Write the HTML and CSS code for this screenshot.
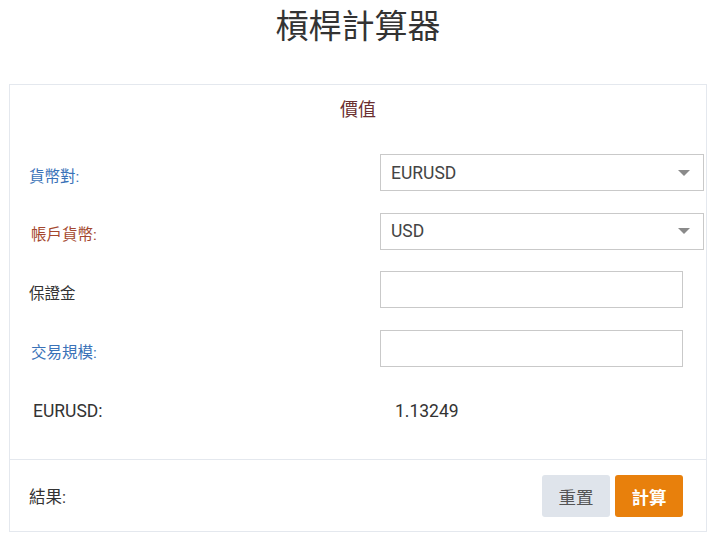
FILE: index.html
```html
<!DOCTYPE html>
<html lang="zh-Hant">
<head>
<meta charset="utf-8">
<title>槓桿計算器</title>
<link rel="stylesheet" href="styles.css">
</head>
<body>
<div class="page">
  <h1 class="title">槓桿計算器</h1>
  <div class="card">
    <div class="card-head">價值</div>
    <div class="form">
      <div class="row">
        <label class="label label-blue">貨幣對:</label>
        <div class="select">
          <span>EURUSD</span>
          <span class="caret"></span>
        </div>
      </div>
      <div class="row">
        <label class="label label-red">帳戶貨幣:</label>
        <div class="select">
          <span>USD</span>
          <span class="caret"></span>
        </div>
      </div>
      <div class="row">
        <label class="label label-plain">保證金</label>
        <input class="input" type="text">
      </div>
      <div class="row">
        <label class="label label-blue label-shift">交易規模:</label>
        <input class="input" type="text">
      </div>
    </div>
    <div class="rate">
      <span class="rate-label">EURUSD:</span>
      <span class="rate-value">1.13249</span>
    </div>
    <div class="card-foot">
      <span class="result">結果:</span>
      <div class="actions">
        <button class="btn btn-reset" type="button">重置</button>
        <button class="btn btn-calc" type="button">計算</button>
      </div>
    </div>
  </div>
</div>
</body>
</html>
```

FILE: styles.css
```css
* {
  box-sizing: border-box;
}

html, body {
  margin: 0;
  padding: 0;
  background: #ffffff;
}

body {
  font-family: Roboto, "Noto Sans CJK TC", "Noto Sans", sans-serif;
  color: #333333;
}

.page {
  padding: 0 8px 0 9px;
}

.title {
  margin: 7px 0 37px;
  font-size: 33px;
  line-height: 40px;
  font-weight: 400;
  text-align: center;
  color: #333333;
}

.card {
  border: 1px solid #e4e8ee;
}

.card-head {
  padding-top: 13px;
  font-size: 18px;
  line-height: 24px;
  text-align: center;
  color: #6b2f30;
}

.form {
  display: flex;
  flex-direction: column;
  gap: 21.7px;
  margin-top: 32px;
}

.row {
  display: grid;
  grid-template-columns: 370px 1fr;
  align-items: center;
  height: 37px;
  padding-right: 2px;
}

.label {
  padding-left: 19px;
  padding-top: 8px;
  font-size: 15.5px;
  line-height: 20px;
}

.label-blue {
  color: #3a72b8;
}

.label-red {
  color: #a4472e;
  padding-left: 21px;
}

.label-shift {
  padding-left: 21px;
}

.label-plain {
  color: #333333;
}

.select {
  display: flex;
  align-items: center;
  justify-content: space-between;
  height: 37px;
  padding: 0 13px 0 10px;
  border: 1px solid #c9c9c9;
  font-size: 17.5px;
  color: #444444;
  background: #ffffff;
}

.caret {
  width: 0;
  height: 0;
  border-left: 6px solid transparent;
  border-right: 6px solid transparent;
  border-top: 6px solid #8a8a8a;
}

.input {
  width: 303px;
  height: 37px;
  margin: 0;
  border: 1px solid #c9c9c9;
  border-radius: 0;
  background: #ffffff;
  font: inherit;
}

.rate {
  display: grid;
  grid-template-columns: 370px 1fr;
  margin-top: 32px;
  padding-bottom: 36px;
  font-size: 17.5px;
  line-height: 24px;
  color: #333333;
}

.rate-label {
  padding-left: 23px;
}

.rate-value {
  padding-left: 15px;
}

.card-foot {
  display: flex;
  align-items: center;
  justify-content: space-between;
  border-top: 1px solid #e4e8ee;
  padding: 15px 23px 14px 19px;
}

.result {
  font-size: 16.5px;
  color: #333333;
}

.actions {
  display: flex;
  gap: 5px;
}

.btn {
  width: 68px;
  height: 42px;
  border: none;
  border-radius: 3px;
  font-family: Roboto, "Noto Sans CJK TC", sans-serif;
  font-size: 17.5px;
  cursor: pointer;
}

.btn-reset {
  background: #dfe4eb;
  color: #555555;
}

.btn-calc {
  background: #e8800c;
  color: #ffffff;
  font-weight: 700;
}
```
